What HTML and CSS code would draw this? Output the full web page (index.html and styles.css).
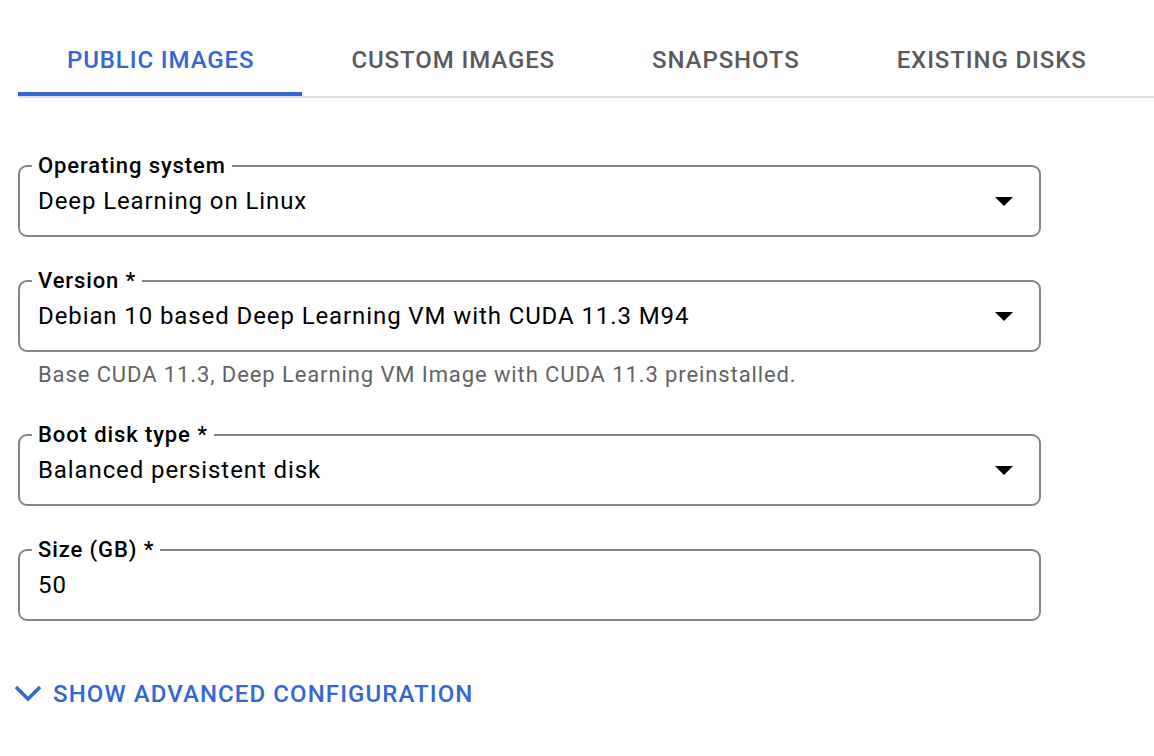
FILE: index.html
```html
<!DOCTYPE html>
<html>
<head>
<meta charset="utf-8">
<link rel="stylesheet" href="styles.css">
</head>
<body>
<div class="page">
  <nav class="tabs">
    <div class="tab active">PUBLIC IMAGES</div>
    <div class="tab">CUSTOM IMAGES</div>
    <div class="tab">SNAPSHOTS</div>
    <div class="tab">EXISTING DISKS</div>
  </nav>

  <form class="form">
    <fieldset class="field">
      <legend class="label">Operating system</legend>
      <div class="value-row">
        <span class="value">Deep Learning on Linux</span>
        <svg class="caret" width="18" height="9" viewBox="0 0 18 9"><path d="M0 0H18L9 9Z" fill="#000"/></svg>
      </div>
    </fieldset>

    <fieldset class="field">
      <legend class="label">Version *</legend>
      <div class="value-row">
        <span class="value">Debian 10 based Deep Learning VM with CUDA 11.3 M94</span>
        <svg class="caret" width="18" height="9" viewBox="0 0 18 9"><path d="M0 0H18L9 9Z" fill="#000"/></svg>
      </div>
    </fieldset>
    <div class="hint">Base CUDA 11.3, Deep Learning VM Image with CUDA 11.3 preinstalled.</div>

    <fieldset class="field after-hint">
      <legend class="label">Boot disk type *</legend>
      <div class="value-row">
        <span class="value">Balanced persistent disk</span>
        <svg class="caret" width="18" height="9" viewBox="0 0 18 9"><path d="M0 0H18L9 9Z" fill="#000"/></svg>
      </div>
    </fieldset>

    <fieldset class="field">
      <legend class="label">Size (GB) *</legend>
      <div class="value-row">
        <span class="value">50</span>
      </div>
    </fieldset>

    <div class="advanced">
      <svg class="chevron" width="28" height="20" viewBox="0 0 28 20"><polyline points="2,3 14,15 26,3" fill="none" stroke="#3367d6" stroke-width="3.6"/></svg>
      <span class="advanced-text">SHOW ADVANCED CONFIGURATION</span>
    </div>
  </form>
</div>
</body>
</html>
```

FILE: styles.css
```css
html, body {
  margin: 0;
  padding: 0;
  background: #fff;
}

body {
  font-family: Roboto, "Liberation Sans", Arial, sans-serif;
  color: #000;
}

.page {
  padding-left: 18px;
}

.tabs {
  display: flex;
  border-bottom: 2px solid #e0e0e0;
}

.tab {
  padding: 46px 48px 18px 49px;
  line-height: 28px;
  font-size: 24px;
  font-weight: 500;
  color: #5a5a5a;
  border-bottom: 4px solid transparent;
  letter-spacing: 0.9px;
}

.tab.active {
  color: #3367d6;
  border-bottom-color: #3367d6;
}

.form {
  width: 1023px;
  padding-top: 56px;
}

.field {
  margin: 0 0 32px 0;
  padding: 9px 36px 20px 18px;
  border: 2px solid #80868b;
  border-radius: 9px;
  min-width: 0;
}

.label {
  padding: 0 6px;
  margin-left: -6px;
  font-size: 22px;
  line-height: 24px;
  font-weight: 500;
  letter-spacing: 0.9px;
  color: #000;
}

.value-row {
  display: flex;
  align-items: center;
  justify-content: space-between;
  height: 28px;
}

.value {
  font-size: 24px;
  line-height: 28px;
  letter-spacing: 0.9px;
  color: #000;
}

.caret {
  display: block;
  margin-right: -10px;
}

.hint {
  margin: -21px 0 0 20px;
  font-size: 22px;
  line-height: 24px;
  letter-spacing: 0.9px;
  color: #5f6368;
}

.after-hint {
  margin-top: 36px;
}

.advanced {
  display: flex;
  align-items: center;
  gap: 11px;
  margin-top: 59px;
  margin-left: -4px;
}

.chevron {
  display: block;
}

.advanced-text {
  font-size: 24px;
  line-height: 28px;
  font-weight: 500;
  letter-spacing: 1.1px;
  color: #3367d6;
}
```
